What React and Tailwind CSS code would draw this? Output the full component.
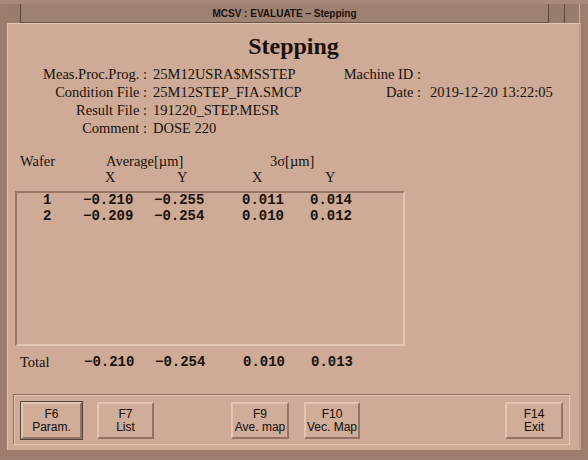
import React from 'react'

const rows = [
  ['1', '−0.210', '−0.255', '0.011', '0.014'],
  ['2', '−0.209', '−0.254', '0.010', '0.012'],
]

function Btn({ top, bottom, className = '' }) {
  return (
    <div
      className={
        'flex h-[37px] flex-col items-center justify-center border-2 border-t-[#e2c6b2] border-l-[#e2c6b2] border-b-[#937364] border-r-[#937364] bg-[#cfad98] font-["Liberation_Sans",sans-serif] text-[12px] leading-[13px] text-[#140a06] ' +
        className
      }
    >
      <span>{top}</span>
      <span>{bottom}</span>
    </div>
  )
}

export default function App() {
  return (
    <div className="h-[460px] w-[588px] overflow-hidden bg-[#9c7d6e] font-['Liberation_Serif',serif] text-[#1c100b]">
      {/* window title bar */}
      <div className="flex h-[23px] border-t-[4px] border-[#a98a7a] pl-[7px] pr-[8px]">
        <div className="w-[14px] border-r border-[#5f463b] bg-[#9a7c6d]" />
        <div className="flex flex-1 items-center justify-center border-b border-[#6e5448] bg-[#9f8172] font-['Liberation_Sans',sans-serif] text-[10px] font-bold text-[#1c100b]">
          MCSV : EVALUATE – Stepping
        </div>
        <div className="w-[17px] border-l border-r border-[#5f463b] bg-[#9a7c6d]" />
        <div className="w-[15px] border-r border-[#cfb09e] bg-[#9a7c6d]" />
      </div>

      {/* window body */}
      <div className="mx-[7px] flex h-[427px] flex-col border-l border-t border-[#e2c6b2] border-r-2 border-r-[#c0a088] bg-[#cdab96]">
        <h1 className="pt-[8px] text-center text-[24px] font-bold leading-[28px]">Stepping</h1>

        <div className="mt-[5px] flex text-[14.5px] leading-[18px]">
          <div className="w-[139px] text-right">
            <div>Meas.Proc.Prog. :</div>
            <div>Condition File :</div>
            <div>Result File :</div>
            <div>Comment :</div>
          </div>
          <div className="ml-[6px] w-[160px]">
            <div>25M12USRA$MSSTEP</div>
            <div>25M12STEP_FIA.SMCP</div>
            <div>191220_STEP.MESR</div>
            <div>DOSE 220</div>
          </div>
          <div className="w-[108px] text-right">
            <div>Machine ID :</div>
            <div>Date :</div>
          </div>
          <div className="ml-[9px]">
            <div>&nbsp;</div>
            <div>2019-12-20 13:22:05</div>
          </div>
        </div>

        <div className="mt-[16px] text-[14.5px] leading-[16px]">
          <div className="flex pl-[12px]">
            <span className="w-[86px]">Wafer</span>
            <span className="w-[164px]">Average[µm]</span>
            <span>3σ[µm]</span>
          </div>
          <div className="flex pl-[97px]">
            <span className="w-[72px]">X</span>
            <span className="w-[75px]">Y</span>
            <span className="w-[73px]">X</span>
            <span>Y</span>
          </div>
        </div>

        <div className="ml-[7px] mt-[6px] h-[155px] w-[390px] border-2 border-t-[#957767] border-l-[#957767] border-b-[#e2c6b2] border-r-[#e2c6b2] font-['Liberation_Mono',monospace] text-[14px] font-bold leading-[16px]">
          <div className="-mt-[1px]">
            {rows.map((r) => (
              <div key={r[0]} className="flex whitespace-pre pl-[26px]">
                <span className="w-[40px]">{r[0]}</span>
                <span className="w-[71px]">{r[1]}</span>
                <span className="w-[88px]">{r[2]}</span>
                <span className="w-[68px]">{r[3]}</span>
                <span>{r[4]}</span>
              </div>
            ))}
          </div>
        </div>

        <div className="mt-[8px] flex pl-[12px] text-[14.5px] leading-[16px]">
          <span className="w-[64px]">Total</span>
          <span className="w-[71px] font-['Liberation_Mono',monospace] text-[14px] font-bold">−0.210</span>
          <span className="w-[88px] font-['Liberation_Mono',monospace] text-[14px] font-bold">−0.254</span>
          <span className="w-[68px] font-['Liberation_Mono',monospace] text-[14px] font-bold">0.010</span>
          <span className="font-['Liberation_Mono',monospace] text-[14px] font-bold">0.013</span>
        </div>

        {/* function key panel */}
        <div className="ml-[5px] mt-[24px] flex h-[51px] w-[557px] items-start border border-t-[#8c6e5f] border-l-[#8c6e5f] border-b-[#e6cab6] border-r-[#e6cab6] pt-[6px] shadow-[inset_1px_1px_0_#e2c6b2]">
          <div className="ml-[6px] border border-[#56443b]">
            <Btn top="F6" bottom="Param." className="w-[61px]" />
          </div>
          <Btn top="F7" bottom="List" className="ml-[14px] mt-[1px] w-[57px]" />
          <Btn top="F9" bottom="Ave. map" className="ml-[77px] mt-[1px] w-[58px]" />
          <Btn top="F10" bottom="Vec. Map" className="ml-[15px] mt-[1px] w-[56px]" />
          <Btn top="F14" bottom="Exit" className="ml-[145px] mt-[1px] w-[58px]" />
        </div>
      </div>
    </div>
  )
}
